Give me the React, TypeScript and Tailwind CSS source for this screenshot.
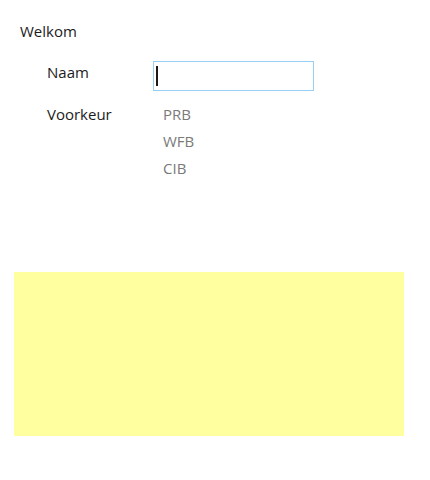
export default function App() {
  return (
    <div className="h-[480px] w-[430px] bg-white font-['Open_Sans',sans-serif] text-[15px] text-[#1b1b1b]">
      <div className="px-5 pt-[20px]">
        <p className="leading-[22px]">Welkom</p>
        <div className="mt-[19px] grid grid-cols-[106px_161px] pl-[27px]">
          <label className="pt-0 leading-[22px]">Naam</label>
          <div className="flex h-[30px] items-center border border-[#99cef3] px-[2px]">
            <span className="h-[20px] w-[2px] bg-[#1b1b1b]" />
          </div>
          <label className="pt-[12px] leading-[22px]">Voorkeur</label>
          <ul className="flex flex-col gap-[5px] pl-[10px] pt-[12px] text-[#7a7a7a]">
            <li className="leading-[22px]">PRB</li>
            <li className="leading-[22px]">WFB</li>
            <li className="leading-[22px]">CIB</li>
          </ul>
        </div>
      </div>
      <div className="ml-[14px] mt-[93px] h-[164px] w-[390px] bg-[#ffffa0]" />
    </div>
  );
}
